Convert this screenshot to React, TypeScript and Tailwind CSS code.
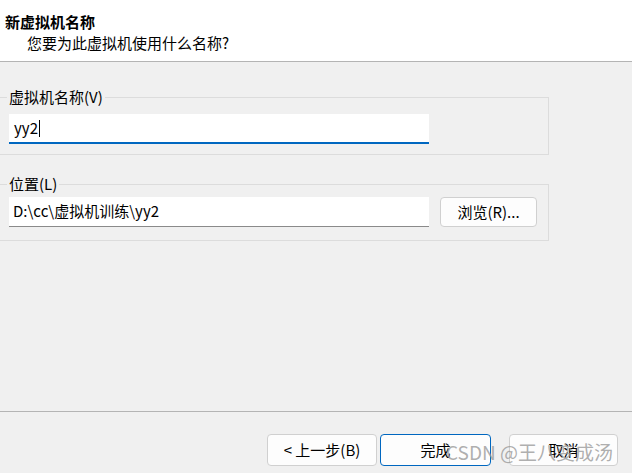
import React from 'react';

const font = { fontFamily: '"Noto Sans CJK SC", "Noto Sans", sans-serif' };

const App: React.FC = () => {
  return (
    <div
      className="w-[632px] h-[473px] bg-[#f0f0f0] flex flex-col relative overflow-hidden text-black text-[15px]"
      style={font}
    >
      {/* Header */}
      <div className="h-[62px] bg-white border-b border-[#b4b4b4] pt-[12px] shrink-0">
        <div className="pl-[5px] leading-[20px] font-bold">新虚拟机名称</div>
        <div className="pl-[27px] leading-[20px] mt-[1px]">您要为此虚拟机使用什么名称?</div>
      </div>

      {/* Body */}
      <div className="flex-1 pt-[25px]">
        <fieldset className="w-[549px] border border-l-0 border-[#dcdcdc] pb-[10px]">
          <legend className="ml-[7px] px-[2px] leading-[20px]">虚拟机名称(V)</legend>
          <div className="ml-[9px] mt-[7px] w-[420px] h-[30px] bg-white border-b-2 border-[#0067c0] flex items-center pl-[5px]">
            <span>yy2</span>
            <span className="w-px h-[17px] bg-black ml-px"></span>
          </div>
        </fieldset>

        <fieldset className="mt-[19px] w-[549px] border border-l-0 border-[#dcdcdc] pb-[13px]">
          <legend className="ml-[7px] px-[2px] leading-[20px]">位置(L)</legend>
          <div className="ml-[9px] mt-[3px] flex items-center gap-[11px]">
            <div className="w-[420px] h-[30px] bg-white border-b border-[#8a8a8a] flex items-center pl-[4px]">
              D:\cc\虚拟机训练\yy2
            </div>
            <button className="w-[97px] h-[30px] bg-[#fdfdfd] border border-[#d0d0d0] rounded-[4px] text-[15px]">
              浏览(R)...
            </button>
          </div>
        </fieldset>
      </div>

      {/* Footer */}
      <div className="h-[62px] border-t border-[#b4b4b4] shrink-0 flex items-start pt-[22px]">
        <button className="ml-[267px] w-[110px] h-[32px] bg-[#fdfdfd] border border-[#d0d0d0] rounded-[4px]">
          &lt; 上一步(B)
        </button>
        <button className="ml-[3px] w-[111px] h-[32px] bg-[#fdfdfd] border border-[#0067c0] rounded-[4px]">
          完成
        </button>
        <button className="ml-[18px] w-[109px] h-[32px] bg-[#fdfdfd] border border-[#d0d0d0] rounded-[4px]">
          取消
        </button>
      </div>

      {/* Watermark */}
      <div className="absolute left-[446px] top-[440px] text-[19px] leading-[24px] text-[#9a9a9a]/80 pointer-events-none whitespace-nowrap">
        CSDN @王八变成汤
      </div>
    </div>
  );
};

export default App;
